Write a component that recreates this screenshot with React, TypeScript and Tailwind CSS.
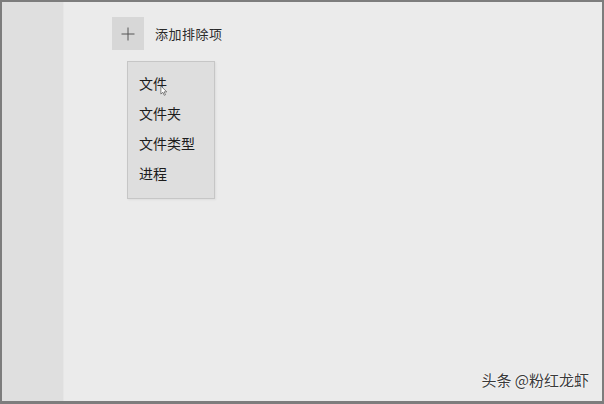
export default function App() {
  const items = ["文件", "文件夹", "文件类型", "进程"];

  return (
    <div
      className="w-[604px] h-[404px] border-2 border-b-[3px] border-[#7d7d7d] bg-[#ebebeb] flex overflow-hidden"
      style={{ fontFamily: '"Noto Sans CJK SC", "Noto Sans", sans-serif' }}
    >
      {/* blurred sidebar */}
      <div className="w-[62px] h-full bg-[#dfdfdf] border-r border-[#e6e6e6] shrink-0" />

      <div className="flex-1 relative">
        <div className="pl-[48px] pt-[15px]">
          <div className="flex items-center gap-[11px]">
            <button className="w-[32px] h-[33px] bg-[#d7d7d7] flex items-center justify-center">
              <svg width="14" height="14" viewBox="0 0 14 14">
                <path d="M7 0.5v13M0.5 7h13" stroke="#555" strokeWidth="1" />
              </svg>
            </button>
            <span className="text-[13px] text-[#2a2a2a] tracking-[0.5px]">添加排除项</span>
          </div>

          <div className="ml-[15px] mt-[11px] w-[88px] h-[138px] bg-[#dedede] border border-[#c6c6c6] pt-[6px] shadow-[1px_1px_2px_rgba(0,0,0,0.06)]">
            {items.map((t, i) => (
              <div key={i} className="relative h-[30px] pl-[11px] flex items-center text-[14px] text-[#1c1c1c]">
                {t}
                {i === 0 && (
                  <svg className="absolute left-[32px] top-[17px]" width="8" height="11" viewBox="0 0 9 12">
                    <path d="M1 1v9l2.2-2 1.6 3.4 1.4-.6-1.6-3.3H7.6z" fill="#fff" stroke="#555" strokeWidth="0.8" />
                  </svg>
                )}
              </div>
            ))}
          </div>
        </div>

        <div
          className="absolute right-[13px] bottom-[10px] text-[15px] text-[#3a3a3a]"
          style={{ textShadow: "0 0 2px #fff, 0 0 1px #fff" }}
        >
          头条 @粉红龙虾
        </div>
      </div>
    </div>
  );
}
